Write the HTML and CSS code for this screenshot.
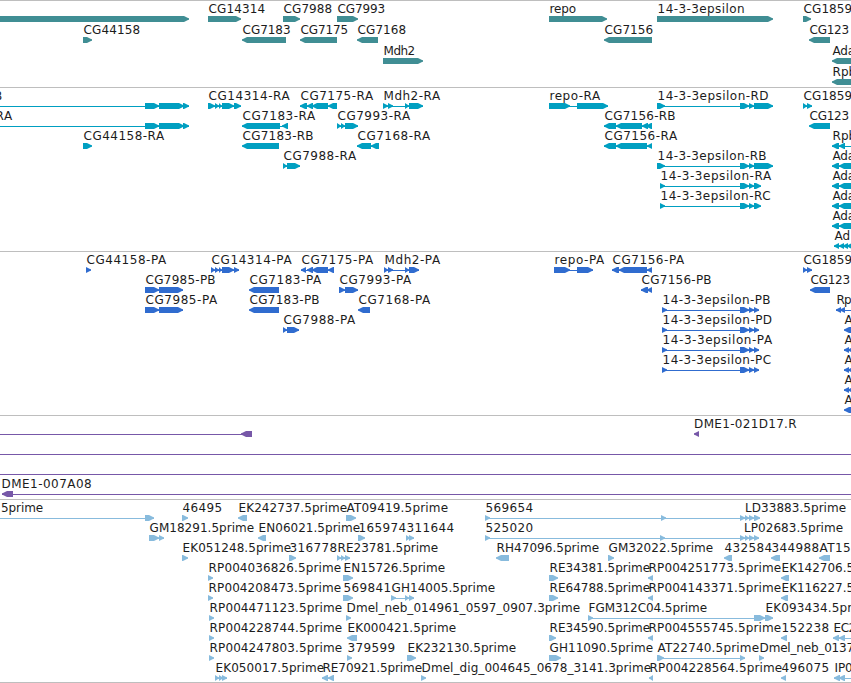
FILE: index.html
```
<!DOCTYPE html>
<html lang="en">
<head>
    <meta charset="UTF-8">
    <meta name="viewport" content="width=device-width, initial-scale=1.0">
    <title>Genome Browser</title>
    <link rel="stylesheet" href="styles.css">
</head>
<body>
    <main class="browser">
        <svg class="track genes" id="genes"></svg>
        <svg class="track transcripts" id="transcripts"></svg>
        <svg class="track proteins" id="proteins"></svg>
        <svg class="track clones" id="clones"></svg>
        <svg class="track ests" id="ests"></svg>
    </main>
    <script src="tracks.js"></script>
</body>
</html>
```
FILE: styles.css
```
body {
    margin: 0;
    background: #fff;
    overflow: hidden;
}

.browser {
    display: flex;
    flex-direction: column;
    width: 851px;
    height: 682px;
    border-bottom: 1px solid #bebebe;
}

.track {
    display: block;
    box-sizing: border-box;
    flex: none;
    width: 851px;
    border-top: 1px solid #bebebe;
    overflow: hidden;
}

.track text {
    font-family: "DejaVu Sans", sans-serif;
    font-size: 12px;
    fill: #1c1c1c;
}

.genes {
    height: 87px;
    color: #408e94;
}

.transcripts {
    height: 164px;
    color: #009fc1;
}

.proteins {
    height: 164px;
    color: #306ccf;
}

.clones {
    height: 84px;
    color: #7758a8;
}

.ests {
    height: 183px;
    color: #88bbdd;
}

.exon,
.intron {
    fill: currentColor;
}

.intron {
    shape-rendering: crispEdges;
}
```
FILE: tracks.js
```
// feature: [row, label, start, label end, strand, exons, intron end (optional)]
const EPS_R = '657-665 740-749 749-754 754-773';
const EPS_S = '660-665 740-749 749-754 754-761';
const EPS_P = '662-667 740-749 749-754 754-759';

const tracks = {
    genes: { pitch: 21, features: [
        [0, '', -10, 0, '+', '-10-189'],
        [0, 'CG14314', 208, 265, '+', '208-241'],
        [0, 'CG7988', 283, 332, '+', '283-300'],
        [0, 'CG7993', 337, 385, '+', '337-358'],
        [0, 'repo', 549, 576, '+', '549-607'],
        [0, '14-3-3epsilon', 657, 744.5, '+', '657-773'],
        [0, 'CG1859', 803, 852, '+', '803-811'],
        [1, 'CG44158', 83, 140, '+', '83-92'],
        [1, 'CG7183', 242, 290.5, '-', '242-286'],
        [1, 'CG7175', 300, 348, '-', '300-337'],
        [1, 'CG7168', 357, 406, '-', '357-378'],
        [1, 'CG7156', 604, 653, '-', '604-652'],
        [1, 'CG123', 809, 849, '-', '809-830'],
        [2, 'Mdh2', 383, 415, '+', '383-423'],
        [2, 'Ada', 832, 855, '-', '832-870'],
        [3, 'Rpb', 832, 856, '-', '832-870']
    ]},
    transcripts: { pitch: 20, features: [
        [0, 'B', -6.5, 2, '+', '-20--10 145-159 159-184 183-189'],
        [0, 'CG14314-RA', 208, 289.5, '+', '208-215 215-219 219-222 222-234 234-241'],
        [0, 'CG7175-RA', 300, 373, '-', '300-307 307-313 312-328 328-337'],
        [0, 'Mdh2-RA', 383, 440, '+', '383-388 388-393 405-409 409-423'],
        [0, 'repo-RA', 549, 600, '+', '549-570 577-608'],
        [0, '14-3-3epsilon-RD', 657, 768.5, '+', EPS_R],
        [0, 'CG1859', 803, 852, '+', '803-807 807-812'],
        [1, 'RA', -5, 12, '+', '-20--10 145-159 159-184 183-189'],
        [1, 'CG7183-RA', 242, 315, '-', '242-280 282-288'],
        [1, 'CG7993-RA', 337, 410, '+', '337-341 341-345 345-358'],
        [1, 'CG7156-RB', 604, 675.5, '-', '604-616 616-642 642-648 646-652'],
        [1, 'CG123', 809, 849, '-', '809-830'],
        [2, 'CG44158-RA', 83, 164, '+', '83-92'],
        [2, 'CG7183-RB', 242, 313.5, '-', '242-279'],
        [2, 'CG7168-RA', 357, 430, '-', '357-371 371-379'],
        [2, 'CG7156-RA', 604, 677, '-', '604-616 616-647 647-652'],
        [2, 'Rpb', 832, 856, '-', '832-839 839-845', 860],
        [3, 'CG7988-RA', 283, 356, '+', '283-287 287-300'],
        [3, '14-3-3epsilon-RB', 657, 766.5, '+', EPS_R],
        [3, 'Ada', 832, 855, '-', '832-839 839-860'],
        [4, '14-3-3epsilon-RA', 660, 771, '+', EPS_S],
        [4, 'Ada', 832, 855, '-', '832-839 839-860'],
        [5, '14-3-3epsilon-RC', 660, 770.5, '+', EPS_S],
        [5, 'Ada', 832, 855, '-', '832-839 839-860'],
        [6, 'Ada', 832, 855, '-', '832-839 839-860'],
        [7, 'Ad', 834, 850, '-', '834-839 839-844 843-848 847-853']
    ]},
    proteins: { pitch: 20, features: [
        [0, 'CG44158-PA', 86, 166, '+', '86-91'],
        [0, 'CG14314-PA', 211, 291.5, '+', '211-215 215-219 219-222 222-234 234-239'],
        [0, 'CG7175-PA', 301, 373, '-', '301-306 307-313 312-328 328-334'],
        [0, 'Mdh2-PA', 384, 440, '+', '384-388 388-393 405-409 409-419'],
        [0, 'repo-PA', 554, 604, '+', '554-570 577-593'],
        [0, 'CG7156-PA', 612, 684, '-', '612-619 619-647 647-652'],
        [0, 'CG1859', 803, 852, '+', '803-807 807-812'],
        [1, 'CG7985-PB', 145, 215.5, '+', '145-159 159-183'],
        [1, 'CG7183-PA', 249, 321, '-', '249-279'],
        [1, 'CG7993-PA', 339, 411, '+', '339-345 345-358'],
        [1, 'CG7156-PB', 641, 711.5, '-', '641-648 647-652'],
        [1, 'CG123', 810, 850, '-', '810-830'],
        [2, 'CG7985-PA', 145, 217, '+', '145-159 159-183'],
        [2, 'CG7183-PB', 249, 319.5, '-', '249-279'],
        [2, 'CG7168-PA', 358, 430, '-', '358-370'],
        [2, '14-3-3epsilon-PB', 662, 770.5, '+', EPS_P],
        [2, 'Rp', 836, 851.5, '-', '836-841 840-845', 860],
        [3, 'CG7988-PA', 283, 355, '+', '283-287 287-299'],
        [3, '14-3-3epsilon-PD', 662, 772, '+', EPS_P],
        [3, 'A', 844, 852, '-', '844-860'],
        [4, '14-3-3epsilon-PA', 662, 772, '+', EPS_P],
        [4, 'A', 844, 852, '-', '844-849 848-860'],
        [5, '14-3-3epsilon-PC', 662, 771, '+', EPS_P],
        [5, 'A', 844, 852, '-', '844-849 848-860'],
        [6, 'A', 844, 852, '-', '844-849 848-860'],
        [7, 'A', 844, 852, '-', '844-860']
    ]},
    clones: { pitch: 20, features: [
        [0, '', -20, 0, '-', '-20--10 241-252'],
        [0, 'DME1-021D17.R', 693.5, 796.5, '-', '694-699'],
        [1, '', -20, 0, '-', '-20--10', 860],
        [2, '', -20, 0, '-', '-20--10', 860],
        [3, 'DME1-007A08', 1, 91.5, '-', '2-13', 860]
    ]},
    ests: { pitch: 20, features: [
        [0, '5prime', 0.5, 43, '+', '-20--10 145-154'],
        [0, '46495', 182, 222, '+', '182-188'],
        [0, 'EK242737.5prime', 238, 347, '-', '238-247'],
        [0, 'AT09419.5prime', 346, 448, '+', '346-356'],
        [0, '569654', 485, 533, '+', '485-490 661-666 740-745 745-749 749-754 754-760'],
        [0, 'LD33883.5prime', 744.5, 846, '+', ''],
        [1, 'GM18291.5prime', 149, 254, '+', '149-159 159-164'],
        [1, 'EN06021.5prime', 258, 360, '-', '258-266'],
        [1, '165974', 358, 406, '+', '358-365'],
        [1, '311644', 406, 454, '+', '406-410 409-414'],
        [1, '525020', 485, 533, '+', '485-490 660-665 740-745 745-749 749-754 754-759'],
        [1, 'LP02683.5prime', 743.5, 843, '+', ''],
        [2, 'EK051248.5prime', 182, 291, '+', '182-188'],
        [2, '316778', 289, 337, '+', '289-296'],
        [2, 'RE23781.5prime', 337, 438, '+', '337-341 341-345 345-350'],
        [2, 'RH47096.5prime', 496, 599, '-', '496-509'],
        [2, 'GM32022.5prime', 608, 713, '+', '608-614'],
        [2, '432584', 724, 772, '-', '724-732'],
        [2, '344988', 771, 819, '-', '771-780'],
        [2, 'AT15', 819, 850.5, '-', '819-830'],
        [3, 'RP004036826.5prime', 208, 341, '+', '208-213'],
        [3, 'EN15726.5prime', 343, 445, '+', '343-353'],
        [3, 'RE34381.5prime', 549, 650, '+', '549-558'],
        [3, 'RP004251773.5prime', 648, 781, '-', '648-653'],
        [3, 'EK142706.5', 781, 854, '-', '781-789'],
        [4, 'RP004208473.5prime', 208, 341, '+', '208-213'],
        [4, '569841', 343, 391, '+', '343-353'],
        [4, 'GH14005.5prime', 391, 495, '+', '391-396 405-409 409-414'],
        [4, 'RE64788.5prime', 549, 650, '+', '549-558'],
        [4, 'RP004143371.5prime', 648, 781, '-', '648-653'],
        [4, 'EK116227.5', 781, 854, '-', '781-788'],
        [5, 'RP004471123.5prime', 209, 342, '+', '209-214'],
        [5, 'Dmel_neb_014961_0597_0907.3prime', 346, 580, '+', '346-351'],
        [5, 'FGM312C04.5prime', 588, 707, '+', '588-593 754-765 765-773'],
        [5, 'EK093434.5pr', 765, 852, '+', ''],
        [6, 'RP004228744.5prime', 209, 342, '+', '209-214'],
        [6, 'EK000421.5prime', 347, 456, '-', '347-357'],
        [6, 'RE34590.5prime', 549, 650, '+', '549-556'],
        [6, 'RP004555745.5prime', 648, 781, '-', '648-653'],
        [6, '152238', 781, 829, '-', '781-787'],
        [6, 'EC2', 833, 856, '-', '833-839 839-845', 860],
        [7, 'RP004247803.5prime', 209, 342, '+', '209-214'],
        [7, '379599', 347, 395, '+', '347-352'],
        [7, 'EK232130.5prime', 407, 516, '+', '407-416'],
        [7, 'GH11090.5prime', 549, 653, '+', '549-561'],
        [7, 'AT22740.5prime', 657, 759, '+', '657-664 740-745'],
        [7, 'Dmel_neb_0137', 759, 854, '+', '759-764'],
        [8, 'EK050017.5prime', 215, 324, '+', '215-219 219-223 222-227'],
        [8, 'RE70921.5prime', 322, 422, '-', '322-328 328-334'],
        [8, 'Dmel_dig_004645_0678_3141.3prime', 421, 651, '+', '421-426'],
        [8, 'RP004228564.5prime', 649, 782, '-', '649-653'],
        [8, '496075', 781, 829, '-', '781-786'],
        [8, 'IP0', 834, 852.5, '-', '834-840 839-845', 860]
    ]}
};

function add(svg, tag, attrs, text) {
    const el = document.createElementNS('http://www.w3.org/2000/svg', tag);
    for (const key in attrs) {
        el.setAttribute(key, attrs[key]);
    }
    if (text) {
        el.textContent = text;
    }
    svg.appendChild(el);
}

// block with a blunt pointed end in the direction of the strand
function exonPoints(start, end, top, strand) {
    const head = Math.min(5, end - start);
    const dir = strand === '+' ? 1 : -1;
    const tip = strand === '+' ? end : start;
    const tail = strand === '+' ? start : end;
    const neck = tip - dir * head;
    return [
        [tail, top], [neck, top], [tip - dir, top + 2], [tip, top + 2.3],
        [tip, top + 3.7], [tip - dir, top + 4], [neck, top + 6], [tail, top + 6]
    ].join(' ');
}

for (const id in tracks) {
    const svg = document.getElementById(id);
    const { pitch, features } = tracks[id];

    for (const [row, label, start, labelEnd, strand, exonText, intronEnd] of features) {
        const top = row * pitch + 15;
        const exons = [...exonText.matchAll(/(-?\d+)-(-?\d+)/g)].map(m => [Number(m[1]), Number(m[2])]);

        if (exons.length) {
            const from = exons[0][0];
            const to = intronEnd || exons[exons.length - 1][1];
            if (exons.length > 1 || intronEnd) {
                add(svg, 'rect', { class: 'intron', x: from, y: top + 3, width: to - from, height: 1 });
            }
        }
        for (const [a, b] of exons) {
            add(svg, 'polygon', { class: 'exon', points: exonPoints(a, b, top, strand) });
        }
        if (label) {
            add(svg, 'text', { x: start + 0.6, y: top - 3, textLength: labelEnd - start - 0.5 }, label);
        }
    }
}
```
